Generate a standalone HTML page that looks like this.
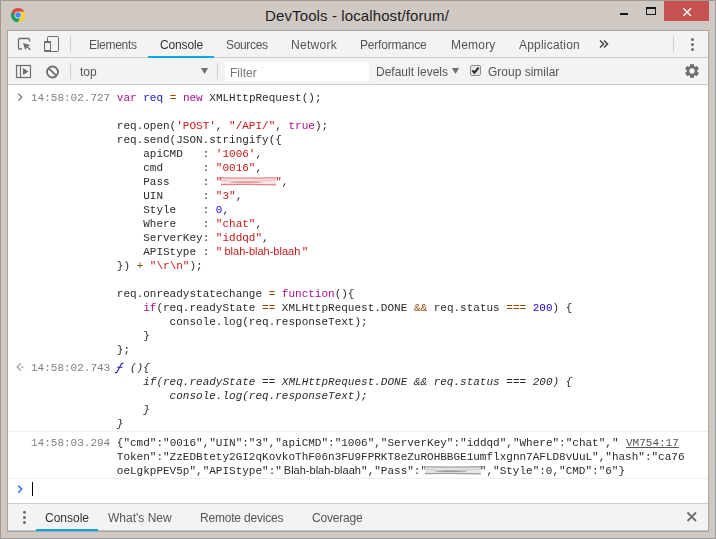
<!DOCTYPE html>
<html><head><meta charset="utf-8">
<style>
*{box-sizing:border-box}
html,body{margin:0;padding:0}
body{width:716px;height:539px;position:relative;overflow:hidden;background:#cfc8c3;font-family:"Liberation Sans",sans-serif}
.abs{position:absolute}
#outer{left:0;top:0;width:716px;height:539px;border:1px solid #9d9995}
#title{left:-1px;top:7px;width:716px;text-align:center;font-size:15px;color:#1e1e1e;line-height:18px;letter-spacing:0.11px}
#close{left:664px;top:1px;width:45px;height:20px;background:#c75050}
#content{left:7px;top:30px;width:702px;height:502px;border:1px solid #aaa49f;background:#fff;overflow:hidden}
.tb{position:absolute;left:0;width:700px;background:#f3f3f3;border-bottom:1px solid #cccccc}
.tab{position:absolute;top:1px;font-size:12px;color:#555;line-height:26px;white-space:nowrap;will-change:transform}
.sep{position:absolute;width:1px;background:#cfcfcf}
.mono{font-family:"Liberation Mono",monospace;font-size:11px;line-height:14px;white-space:pre;position:absolute;color:#2a2a2a;will-change:transform}
.ts{color:#808080}
.kw{color:#ab0d90}
.df{color:#1a1aa6}
.op{color:#994500}
.st{color:#c51916}
.nu{color:#1c00d1}
.it{font-style:italic}
.prop{font-family:"Liberation Sans",sans-serif;font-size:11px;display:inline-block;width:79.2px;padding-left:2px;font-style:normal;height:14px;line-height:14px;vertical-align:top;position:relative;top:-1px}
</style></head><body>
<div id="outer" class="abs"></div>
<svg class="abs" style="left:0;top:0" width="36" height="30"><g transform="translate(18.1,15.1)">
<path d="M6.399 -3.3 A7.2 7.2 0 0 0 -6.057 -3.892 L-2.858 1.65 A3.3 3.3 0 0 1 0 -3.3 Z" fill="#db4a3c"/>
<path d="M6.399 -3.3 A7.2 7.2 0 0 1 -0.342 7.192 L2.858 1.65 A3.3 3.3 0 0 0 0 -3.3 Z" fill="#fccb3a"/>
<path d="M-0.342 7.192 A7.2 7.2 0 0 1 -6.057 -3.892 L-2.858 1.65 A3.3 3.3 0 0 0 2.858 1.65 Z" fill="#1a9e5c"/>
<circle r="3.4" fill="#f1f1f1"/><circle r="2.75" fill="#4688f1"/></g></svg>
<div id="title" class="abs">DevTools - localhost/forum/</div>
<!-- window buttons -->
<div class="abs" style="left:620px;top:13px;width:8px;height:2px;background:#161616"></div>
<div class="abs" style="left:646px;top:7px;width:10px;height:8px;border:1px solid #161616;border-top-width:2px"></div>
<div id="close" class="abs"></div>
<svg class="abs" style="left:664px;top:1px" width="45" height="20"><path d="M19.3 7.3 L27 15 M27 7.3 L19.3 15" stroke="#fff" stroke-width="1.4" fill="none"/></svg>

<div id="content" class="abs">
  <!-- toolbar 1 -->
  <div class="tb" style="top:0;height:27px">
    <svg class="abs" style="left:0;top:0" width="60" height="26">
      <path d="M14 18 H11.5 Q10.5 18 10.5 17 V8.5 Q10.5 7.5 11.5 7.5 H20.5 Q21.5 7.5 21.5 8.5 V10.5" stroke="#6e6e6e" stroke-width="1.3" fill="none"/>
      <path d="M15 12 L22.5 14.2 L19.8 15.3 L22.8 18.3 L21.8 19.3 L18.8 16.3 L17.2 19 Z" fill="#6e6e6e"/>
      <rect x="39.5" y="5.5" width="11" height="15" rx="1" fill="none" stroke="#6e6e6e" stroke-width="1"/>
      <path d="M36 11 Q36 10 37 10 H42 Q43 10 43 11 V20 Q43 21 42 21 H37 Q36 21 36 20 Z" fill="#6e6e6e"/>
      <rect x="37" y="12" width="5" height="7" fill="#f3f3f3"/>
    </svg>
    <div class="sep" style="left:62px;top:5px;height:16px"></div>
    <div class="tab" style="left:81px;letter-spacing:-0.28px">Elements</div>
    <div class="tab" style="left:152px;color:#333;letter-spacing:-0.15px">Console</div>
    <div class="abs" style="left:140px;top:25px;width:66px;height:2px;background:#03a9f4"></div>
    <div class="tab" style="left:218px;letter-spacing:-0.33px">Sources</div>
    <div class="tab" style="left:283px;letter-spacing:0.3px">Network</div>
    <div class="tab" style="left:352px;letter-spacing:-0.2px">Performance</div>
    <div class="tab" style="left:443px;letter-spacing:0.2px">Memory</div>
    <div class="tab" style="left:511px;letter-spacing:0.2px">Application</div>
    <svg class="abs" style="left:590px;top:8px" width="14" height="10"><path d="M2 1.5 L5.5 5 L2 8.5 M6 1.5 L9.5 5 L6 8.5" stroke="#444" stroke-width="1.5" fill="none"/></svg>
    <div class="sep" style="left:665px;top:5px;height:16px"></div>
    <svg class="abs" style="left:678px;top:0" width="14" height="26"><circle cx="6.5" cy="8.5" r="1.5" fill="#6e6e6e"/><circle cx="6.5" cy="13.5" r="1.5" fill="#6e6e6e"/><circle cx="6.5" cy="18.5" r="1.5" fill="#6e6e6e"/></svg>
  </div>
  <!-- toolbar 2 -->
  <div class="tb" style="top:27px;height:27px">
    <svg class="abs" style="left:0;top:0" width="60" height="26">
      <rect x="8.5" y="7.5" width="14" height="12" fill="none" stroke="#6e6e6e" stroke-width="1.2"/>
      <line x1="12.5" y1="7.5" x2="12.5" y2="19.5" stroke="#6e6e6e" stroke-width="1.2"/>
      <path d="M15 10 L20.5 13.5 L15 17 Z" fill="#6e6e6e"/>
      <circle cx="44.5" cy="14" r="5.5" fill="none" stroke="#6e6e6e" stroke-width="1.8"/>
      <line x1="40.8" y1="10.3" x2="48.2" y2="17.7" stroke="#6e6e6e" stroke-width="1.8"/>
    </svg>
    <div class="sep" style="left:62px;top:5px;height:16px"></div>
    <div class="tab" style="left:72px">top</div>
    <svg class="abs" style="left:193px;top:10px" width="8" height="7"><path d="M0 0 H7 L3.5 6 Z" fill="#6e6e6e"/></svg>
    <div class="sep" style="left:209px;top:5px;height:16px"></div>
    <div class="abs" style="left:217px;top:4px;width:144px;height:19px;background:#fff"></div>
    <div class="tab" style="left:222px;top:2px;color:#777">Filter</div>
    <div class="tab" style="left:368px">Default levels</div>
    <svg class="abs" style="left:444px;top:10px" width="8" height="7"><path d="M0 0 H7 L3.5 6 Z" fill="#6e6e6e"/></svg>
    <svg class="abs" style="left:462px;top:7px" width="12" height="12">
      <rect x="0.5" y="0.5" width="10" height="10" rx="1.5" fill="#e6e6e6" stroke="#8e8e8e"/>
      <path d="M2.4 5.4 L4.5 7.6 L8.6 2.6" stroke="#2a2a2a" stroke-width="2.1" fill="none"/>
    </svg>
    <div class="tab" style="left:480px">Group similar</div>
    <svg class="abs" style="left:674px;top:3px" width="20" height="20"><g transform="translate(10,10)" fill="#6e6e6e"><circle r="5.2"/><rect x="-2" y="-6.8" width="4" height="13.6"/><rect x="-2" y="-6.8" width="4" height="13.6" transform="rotate(60)"/><rect x="-2" y="-6.8" width="4" height="13.6" transform="rotate(120)"/><circle r="2.7" fill="#f3f3f3"/></g></svg>
  </div>

  <!-- console -->
  <div id="console" class="abs" style="left:0;top:54px;width:700px;height:418px;background:#fff">
  </div>

  <!-- drawer -->
  <div class="abs" style="left:0;top:472px;width:700px;height:28px;background:#f3f3f3;border-top:1px solid #cccccc;border-bottom:1px solid #c4c4c4">
  </div>
</div>

<!-- console text -->
<svg class="abs" style="left:14px;top:91px" width="12" height="14"><path d="M4.4 2.8 L7.8 6.2 L4.4 9.6" stroke="#808080" stroke-width="1.4" fill="none"/></svg>
<div class="mono" style="left:31px;top:91px"><span class="ts">14:58:02.727</span> <span class="kw">var</span> <span class="df">req</span> <span class="op">=</span> <span class="kw">new</span> XMLHttpRequest();

             req.open(<span class="st">'POST'</span>, <span class="st">"/API/"</span>, <span class="kw">true</span>);
             req.send(JSON.stringify({
                 apiCMD   : <span class="st">'1006'</span>,
                 cmd      : <span class="st">"0016"</span>,
                 Pass     : <span class="st">"        "</span>,
                 UIN      : <span class="st">"3"</span>,
                 Style    : <span class="nu">0</span>,
                 Where    : <span class="st">"chat"</span>,
                 ServerKey: <span class="st">"iddqd"</span>,
                 APIStype : <span class="st">"<span class="prop">blah-blah-blaah</span>"</span>
             }) <span class="op">+</span> <span class="st">"\r\n"</span>);

             req.onreadystatechange <span class="op">=</span> <span class="kw">function</span>(){
                 <span class="kw">if</span>(req.readyState <span class="op">==</span> XMLHttpRequest.DONE <span class="op">&amp;&amp;</span> req.status <span class="op">===</span> <span class="nu">200</span>) {
                     console.log(req.responseText);
                 }
             };</div>
<svg class="abs" style="left:221px;top:176px" width="55" height="10"><rect x="0" y="1" width="55" height="8" fill="#f8e2e2"/><path d="M0 4.2 Q27 7 55 3.6" stroke="#efbcbc" stroke-width="1" fill="none"/><path d="M0 1.8 Q27 2.6 55 1.6" stroke="#e39090" stroke-width="1.2" fill="none"/><path d="M0 8.6 Q27 8 55 8.8" stroke="#df8484" stroke-width="1.2" fill="none"/><ellipse cx="25" cy="6.3" rx="16" ry="0.8" fill="#e49494"/></svg>

<svg class="abs" style="left:14px;top:361px" width="12" height="14"><path d="M6.8 2.6 L3.2 6 L6.8 9.4" stroke="#a6a6a6" stroke-width="1.4" fill="none"/><circle cx="8.4" cy="6" r="1" fill="#a6a6a6"/></svg>
<div class="mono it" style="left:31px;top:361px"><span class="ts" style="font-style:normal">14:58:02.743</span>   (){
                 if(req.readyState == XMLHttpRequest.DONE &amp;&amp; req.status === 200) {
                     console.log(req.responseText);
                 }
             }</div>

<svg class="abs" style="left:112px;top:360px" width="14" height="16"><path d="M11.2 3.4 Q9.6 3 9 4.4 L5.4 11.6 Q4.8 12.7 3 12.6" stroke="#2424b8" stroke-width="1.15" fill="none"/><path d="M5.2 7.3 H10.6" stroke="#2424b8" stroke-width="1"/></svg>
<div class="mono" style="left:31px;top:436px"><span class="ts">14:58:03.294</span> {"cmd":"0016","UIN":"3","apiCMD":"1006","ServerKey":"iddqd","Where":"chat","
             Token":"ZzEDBtety2GI2qKovkoThF06n3FU9FPRKT8eZuROHBBGE1umflxgnn7AFLD8vUuL","hash":"ca76
             oeLgkpPEV5p","APIStype":"<span class="prop">Blah-blah-blaah</span>","Pass":"        ","Style":0,"CMD":"6"}</div>
<div class="abs" style="left:626px;top:436px;font-family:'Liberation Mono';font-size:11px;line-height:14px;color:#555;text-decoration:underline;will-change:transform">VM754:17</div>
<svg class="abs" style="left:425px;top:465px" width="56" height="10"><rect x="0" y="1" width="56" height="8" fill="#e8e8e8"/><path d="M0 4.2 Q28 7 56 3.6" stroke="#c8c8c8" stroke-width="1" fill="none"/><path d="M0 1.8 Q28 2.6 56 1.6" stroke="#a2a2a2" stroke-width="1.2" fill="none"/><path d="M0 8.6 Q28 8 56 8.8" stroke="#9a9a9a" stroke-width="1.2" fill="none"/><ellipse cx="26" cy="6.3" rx="16" ry="0.8" fill="#9a9a9a"/></svg>
<div class="abs" style="left:8px;top:431px;width:700px;height:1px;background:#f0f0f0"></div>
<div class="abs" style="left:8px;top:478px;width:700px;height:1px;background:#f0f0f0"></div>
<svg class="abs" style="left:14px;top:482px" width="12" height="14"><path d="M4.3 3.6 L7.8 7.1 L4.3 10.6" stroke="#367cf1" stroke-width="1.5" fill="none"/></svg>
<div class="abs" style="left:32px;top:482px;width:1px;height:14px;background:#000"></div>

<!-- drawer text -->
<svg class="abs" style="left:20px;top:508px" width="10" height="18"><circle cx="4.5" cy="4.3" r="1.5" fill="#6e6e6e"/><circle cx="4.5" cy="9.4" r="1.5" fill="#6e6e6e"/><circle cx="4.5" cy="14.4" r="1.5" fill="#6e6e6e"/></svg>
<div class="tab" style="left:45px;top:505px;color:#333">Console</div>
<div class="abs" style="left:36px;top:529px;width:62px;height:2px;background:#03a9f4"></div>
<div class="tab" style="left:108px;top:505px">What's New</div>
<div class="tab" style="left:200px;top:505px;letter-spacing:-0.2px">Remote devices</div>
<div class="tab" style="left:312px;top:505px;letter-spacing:-0.2px">Coverage</div>
<svg class="abs" style="left:686px;top:511px" width="12" height="12"><path d="M1.5 1.5 L10 10 M10 1.5 L1.5 10" stroke="#6e6e6e" stroke-width="1.8" fill="none"/></svg>
</body></html>
